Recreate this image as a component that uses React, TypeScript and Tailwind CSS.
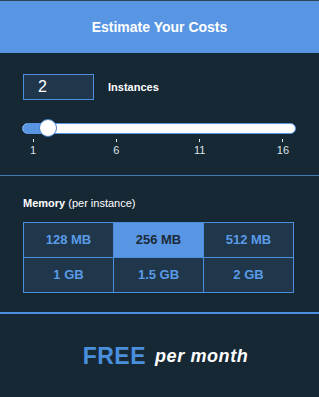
import { useState } from "react";

const sizes = ["128 MB", "256 MB", "512 MB", "1 GB", "1.5 GB", "2 GB"];
const ticks = ["1", "6", "11", "16"];

const App = () => {
  const [selected, setSelected] = useState("256 MB");

  return (
    <div
      className="w-[319px] h-[397px] bg-[#172835] border-t border-[#2c4356] flex flex-col"
      style={{ fontFamily: '"Liberation Sans", Arial, sans-serif' }}
    >
      {/* Header */}
      <div className="h-[52px] bg-[#5896e3] flex items-center justify-center">
        <h1 className="text-white text-[14px] font-bold">Estimate Your Costs</h1>
      </div>

      {/* Instances */}
      <div className="pt-[21px] pl-[23px] pr-[23px] h-[122px]">
        <div className="flex items-center gap-[14px]">
          <div className="w-[71px] h-[26px] border border-[#4a8fdc] bg-[#1f364b] flex items-center pl-[14px] text-white text-[16px]">
            2
          </div>
          <span className="text-white text-[11px] font-bold">Instances</span>
        </div>

        {/* Slider */}
        <div className="mt-[19px] -ml-[1px] w-[274px] h-[18px] flex items-center">
          <div className="w-full h-[11px] rounded-full bg-white border border-[#5896e3] flex items-center">
            <div className="w-[18px] h-full rounded-l-full bg-[#5896e3]" />
            <div className="w-[18px] h-[18px] -ml-[2px] rounded-full bg-white border border-[#3f7fcc] shrink-0" />
          </div>
        </div>
        <div className="mt-[2px] ml-[4px] w-[262px] flex justify-between">
          {ticks.map((t) => (
            <div key={t} className="w-[12px] flex flex-col items-center">
              <div className="w-px h-[3px] bg-[#e5e9ee]" />
              <span className="mt-[2px] text-[11px] text-[#dde2e8] leading-[12px]">{t}</span>
            </div>
          ))}
        </div>
      </div>

      <div className="h-px bg-[#4577b0]" />

      {/* Memory */}
      <div className="pl-[23px] pt-[21px] h-[136px]">
        <p className="text-white text-[11px] leading-[13px]">
          <span className="font-bold">Memory</span> (per instance)
        </p>
        <div className="mt-[12px] w-[271px] grid grid-cols-3 border-t border-l border-[#4a8fdc]">
          {sizes.map((s) => (
            <button
              key={s}
              onClick={() => setSelected(s)}
              className={`h-[35px] border-r border-b border-[#4a8fdc] text-[13px] font-bold flex items-center justify-center ${
                selected === s ? "bg-[#5896e3] text-[#1b2a38]" : "bg-[#1f364b] text-[#5a9be6]"
              }`}
            >
              {s}
            </button>
          ))}
        </div>
      </div>

      <div className="h-[2px] bg-[#4a90e2]" />

      {/* Price */}
      <div className="flex-1 flex items-center justify-center gap-[9px] pl-[12px] pt-[2px]">
        <span className="text-[23px] font-bold text-[#4a8fdc] tracking-[0.5px]">FREE</span>
        <span className="text-[18px] font-bold italic text-white tracking-[0.6px]">per month</span>
      </div>
    </div>
  );
};

export default App;
